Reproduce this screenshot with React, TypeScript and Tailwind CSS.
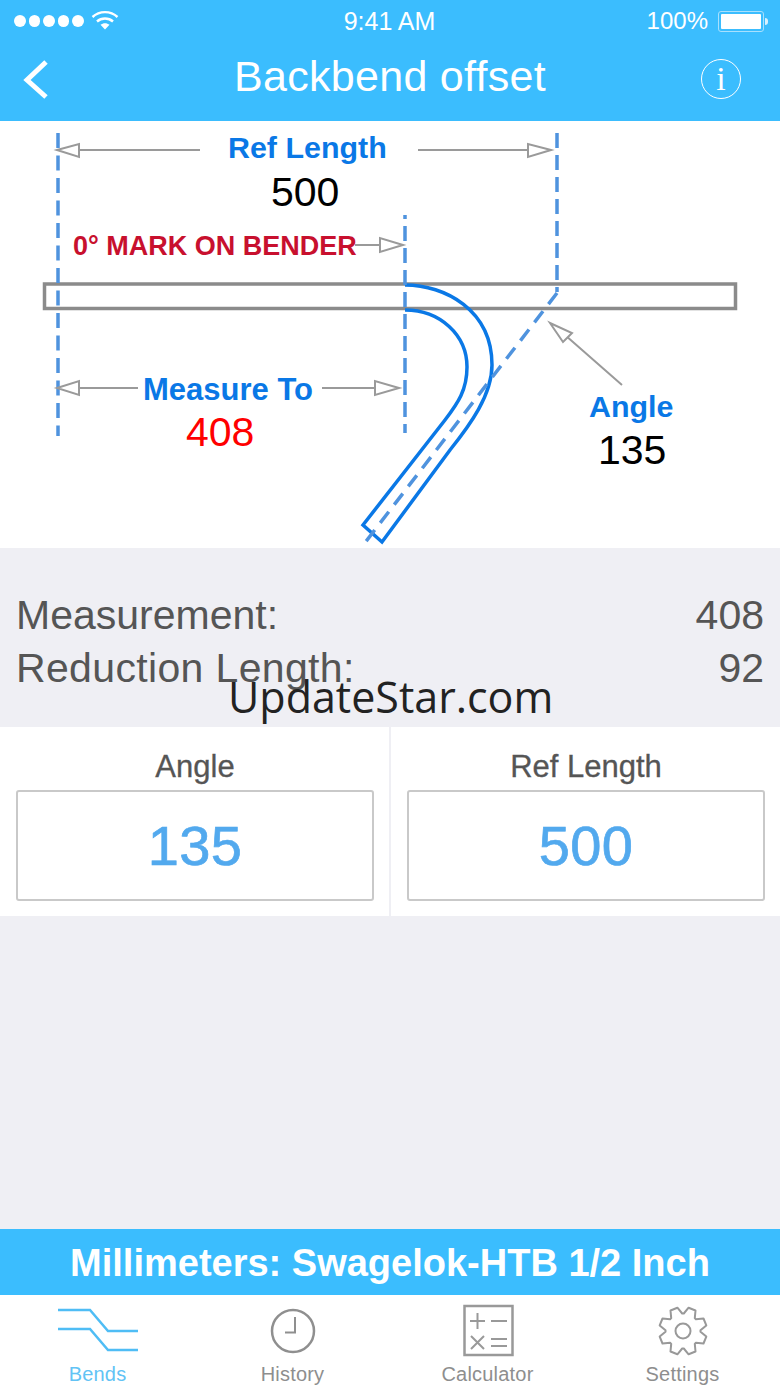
const sans = "font-['Liberation_Sans',Arial,sans-serif]";

function gearPath(cx: number, cy: number, outer: number, inner: number) {
  const points: string[] = [];
  for (let i = 0; i < 8; i++) {
    const mid = -90 + 22.5 + i * 45;
    const offsets: [number, number][] = [
      [-20, inner],
      [-9, outer],
      [9, outer],
      [20, inner],
    ];
    for (const [delta, radius] of offsets) {
      const a = ((mid + delta) * Math.PI) / 180;
      points.push(
        `${(cx + radius * Math.cos(a)).toFixed(1)} ${(cy + radius * Math.sin(a)).toFixed(1)}`,
      );
    }
  }
  return `M${points.join("L")}Z`;
}

function StatusBar() {
  return (
    <div className="flex h-[42px] items-center justify-between pl-[14px] pr-[12px] text-white">
      <div className="flex w-[257px] items-center gap-[3px]">
        {[0, 1, 2, 3, 4].map((i) => (
          <span key={i} className="h-[11.5px] w-[11.5px] rounded-full bg-white" />
        ))}
        <svg width="28" height="20" viewBox="0 0 28 20" className="ml-[4px] -mt-[3px]" fill="none" stroke="#fff" strokeWidth="2.4">
          <path d="M1.5 7C8.5 0.5 19.5 0.5 26.5 7" />
          <path d="M6 11.5C10.5 7.5 17.5 7.5 22 11.5" />
          <path d="M14 19.5L9.5 14.8C12 12.6 16 12.6 18.5 14.8Z" fill="#fff" stroke="none" />
        </svg>
      </div>
      <span className={`${sans} text-[25px] leading-none`}>9:41 AM</span>
      <div className="flex w-[260px] items-center justify-end gap-[10px]">
        <span className={`${sans} text-[24px] leading-none`}>100%</span>
        <div className="flex items-center gap-[1px]">
          <div className="flex h-[21px] w-[46px] items-center justify-center rounded-[3px] border-[1.5px] border-[#a8e0fd]">
            <div className="h-[15px] w-[40px] rounded-[1px] bg-white" />
          </div>
          <div className="h-[7px] w-[3px] rounded-r-full bg-[#d8f1fe]" />
        </div>
      </div>
    </div>
  );
}

function NavBar() {
  return (
    <div className="flex h-[79px] items-start justify-between pl-[22px] pr-[39px] pt-[17px] text-white">
      <div className="w-[40px]">
        <svg width="28" height="40" viewBox="0 0 28 40" fill="none" stroke="#fff" strokeWidth="5">
          <path d="M24 3L5 21L24 38" />
        </svg>
      </div>
      <span className={`${sans} text-[43px] leading-[42px] tracking-[0.3px] -mt-[4px] ml-[17px]`}>Backbend offset</span>
      <div className="flex h-[40px] w-[40px] items-center justify-center rounded-full border-[1.5px] border-white">
        <span className="font-['Liberation_Serif',serif] text-[34px] leading-none">i</span>
      </div>
    </div>
  );
}

function Hollow({ d }: { d: string }) {
  return <path d={d} fill="#fff" stroke="#9a9a9a" strokeWidth="2" />;
}

function Diagram() {
  return (
    <div className="relative h-[427px] bg-white">
      <svg width="780" height="427" viewBox="0 121 780 427" className="absolute inset-0" fill="none">
        {/* tube */}
        <rect x="44.5" y="284" width="691" height="24.5" stroke="#8b8b8b" strokeWidth="3.5" />
        {/* bend outline */}
        <path d="M405 285C445 285 492 310 492 365C492 395 470 425 450 450L382 542L363 525L445 420C458 403 467 390 467 367C467 335 440 310 405 310" stroke="#0a78e6" strokeWidth="3.5" />
        {/* centre lines */}
        <path d="M58 133V436" stroke="#4f93de" strokeWidth="3.5" strokeDasharray="15 7.5" />
        <path d="M405 215V433" stroke="#4f93de" strokeWidth="3.5" strokeDasharray="15 7" strokeDashoffset="11" />
        <path d="M557 133V292" stroke="#4f93de" strokeWidth="3.5" strokeDasharray="15 7" />
        <path d="M557 293L364 544" stroke="#4f93de" strokeWidth="3.5" strokeDasharray="14 9" />
        {/* dimension lines */}
        <g stroke="#9a9a9a" strokeWidth="2">
          <path d="M79 150H200M418 150H529M355 245H382M79 388H138M322 388H376M622 385L565 335" />
        </g>
        <Hollow d="M57 150L79 144V157Z" />
        <Hollow d="M551 150L528 144V157Z" />
        <Hollow d="M403 245L380 238V252Z" />
        <Hollow d="M57 388L79 381V395Z" />
        <Hollow d="M399 388L375 381V395Z" />
        <Hollow d="M550 323L563 342L572 333Z" />
      </svg>
      <span className={`${sans} absolute left-[228px] top-[8px] text-[30.4px] leading-[36px] font-bold text-[#0a78e6]`}>Ref Length</span>
      <span className={`${sans} absolute left-[271px] top-[48px] text-[41px] leading-[46px] text-black`}>500</span>
      <span className={`${sans} absolute left-[73px] top-[110px] text-[27px] leading-[30px] font-bold text-[#c8102e]`}>0° MARK ON BENDER</span>
      <span className={`${sans} absolute left-[143px] top-[251px] text-[31px] leading-[36px] font-bold text-[#0a78e6]`}>Measure To</span>
      <span className={`${sans} absolute left-[186px] top-[288px] text-[41px] leading-[46px] text-[#ff0000]`}>408</span>
      <span className={`${sans} absolute left-[589px] top-[267px] text-[30.4px] leading-[36px] font-bold text-[#0a78e6]`}>Angle</span>
      <span className={`${sans} absolute left-[598px] top-[306px] text-[41px] leading-[46px] text-black`}>135</span>
    </div>
  );
}

function ResultRow({ label, value, spaced }: { label: string; value: string; spaced?: boolean }) {
  return (
    <div className="flex h-[53px] items-center justify-between">
      <span className={spaced ? "tracking-[0.35px]" : ""}>{label}</span>
      <span>{value}</span>
    </div>
  );
}

function InputField({ label, value }: { label: string; value: string }) {
  return (
    <>
      <div className={`${sans} text-center text-[31px] leading-[34px] text-[#555555] [-webkit-text-stroke:0.3px_#555555]`}>{label}</div>
      <div className="mt-[6px] flex h-[111px] items-center justify-center rounded-[3px] border-2 border-[#c9c9c9] bg-white">
        <span className={`${sans} text-[56px] leading-none tracking-[0.4px] text-[#52a9ee] [-webkit-text-stroke:0.7px_#52a9ee]`}>{value}</span>
      </div>
    </>
  );
}

function TabBar() {
  const tabClass = "flex w-[195px] flex-col items-center";
  const iconClass = "h-[60px] w-[100px] shrink-0";
  const labelClass = `${sans} text-[20px] leading-[24px] mt-[2px] tracking-[0.2px]`;
  return (
    <div className="flex h-[92px] bg-white pt-[5px]">
      <div className={tabClass}>
        <svg className={iconClass} viewBox="47 1300 100 60" fill="none" stroke="#4fbdf5" strokeWidth="2.5">
          <path d="M57 1310H89L107 1331H137" />
          <path d="M57 1329H89L107 1350H137" />
        </svg>
        <span className={`${labelClass} text-[#62c3f5]`}>Bends</span>
      </div>
      <div className={tabClass}>
        <svg className={iconClass} viewBox="242 1300 100 60" fill="none" stroke="#8f8f8f" strokeWidth="2.5">
          <circle cx="292" cy="1331" r="21" />
          <path d="M294 1317V1332.5H284" strokeWidth="2" />
        </svg>
        <span className={`${labelClass} text-[#8e8e8e]`}>History</span>
      </div>
      <div className={tabClass}>
        <svg className={iconClass} viewBox="437 1300 100 60" fill="none" stroke="#999999" strokeWidth="2">
          <rect x="463.5" y="1306" width="48" height="49" strokeWidth="2.5" />
          <path d="M469 1321H484M476.5 1313V1329M490 1321H506M470 1336L483 1349M483 1336L470 1349M490 1339H506M490 1346H506" />
        </svg>
        <span className={`${labelClass} text-[#8e8e8e]`}>Calculator</span>
      </div>
      <div className={tabClass}>
        <svg className={iconClass} viewBox="632 1300 100 60" fill="none" stroke="#999999" strokeWidth="2" strokeLinejoin="round">
          <path d={gearPath(682, 1331, 24, 17.5)} />
          <circle cx="682" cy="1331" r="7.5" />
        </svg>
        <span className={`${labelClass} text-[#8e8e8e]`}>Settings</span>
      </div>
    </div>
  );
}

export default function App() {
  return (
    <div className={`${sans} relative h-[1387px] w-[780px] overflow-hidden bg-[#efeff4]`}>
      <header className="h-[121px] bg-[#3bbdfe]">
        <StatusBar />
        <NavBar />
      </header>
      <Diagram />
      <section className="h-[179px] px-[16px] pt-[41px] text-[41px] text-[#555555]">
        <ResultRow label="Measurement:" value="408" />
        <ResultRow label="Reduction Length:" value="92" spaced />
      </section>
      <section className="flex h-[189px] bg-white">
        <div className="w-[389px] pl-[16px] pr-[15px] pt-[23px]">
          <InputField label="Angle" value="135" />
        </div>
        <div className="w-[391px] border-l-2 border-[#efeff4] pl-[16px] pr-[15px] pt-[23px]">
          <InputField label="Ref Length" value="500" />
        </div>
      </section>
      <div className="h-[313px]" />
      <div className="flex h-[66px] items-center justify-center bg-[#3bbdfe] pt-[2px] text-[38px] font-bold text-white">
        Millimeters: Swagelok-HTB 1/2 Inch
      </div>
      <TabBar />
      <span className="absolute left-[228px] top-[672px] font-['Open_Sans',sans-serif] text-[43px] leading-[50px] text-[#222222]">UpdateStar.com</span>
    </div>
  );
}
